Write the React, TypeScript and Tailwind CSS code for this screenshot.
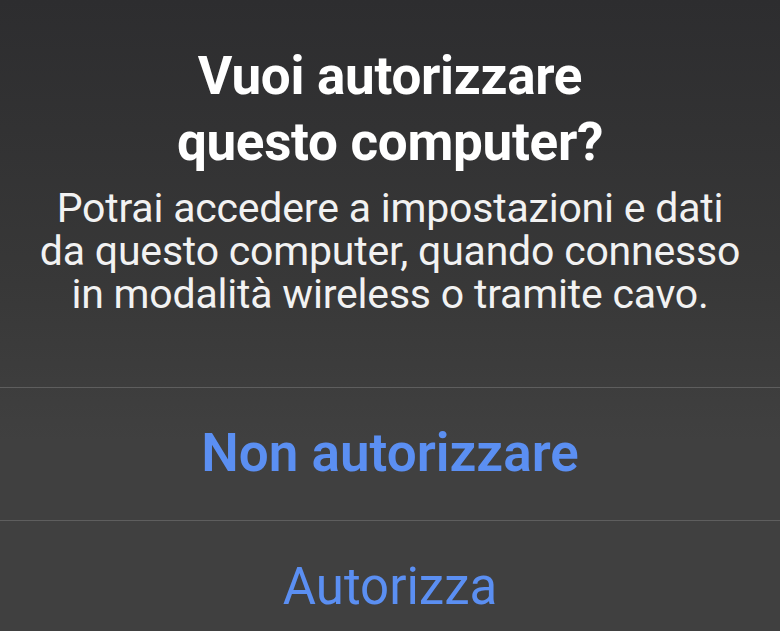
import React from "react";

export default function App() {
  return (
    <div
      className="w-[780px] h-[631px] overflow-hidden flex flex-col bg-[linear-gradient(180deg,#2d2d2f_0%,#383838_45%,#404040_70%,#404040_100%)] text-center"
      style={{ fontFamily: "Roboto, 'Liberation Sans', sans-serif" }}
    >
      <div className="shrink-0 pt-[43px] px-2">
        <h1 className="text-[53px] leading-[66px] font-bold text-white tracking-[-0.3px]">
          Vuoi autorizzare
          <br />
          questo computer?
        </h1>
        <p className="mt-[12px] text-[41px] leading-[43px] text-[#f2f2f2] tracking-[-0.2px]">
          Potrai accedere a impostazioni e dati
          <br />
          da questo computer, quando connesso
          <br />
          in modalità wireless o tramite cavo.
        </p>
      </div>
      <div className="shrink-0 mt-[71px] h-px bg-[#5e5e5e]" />
      <div className="shrink-0 h-[132px] flex items-center justify-center text-[53px] font-semibold text-[#5b8ff2]">
        Non autorizzare
      </div>
      <div className="shrink-0 h-px bg-[#5e5e5e]" />
      <div className="shrink-0 h-[132px] flex items-center justify-center text-[51px] text-[#5b8ff2]">
        Autorizza
      </div>
    </div>
  );
}
